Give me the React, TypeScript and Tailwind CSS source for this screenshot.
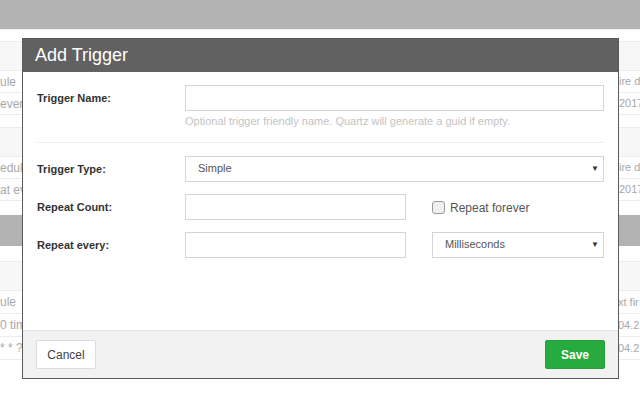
import { ReactNode } from 'react';

type BgRow = { left: string; right: string };

const sectionRows: { rows: BgRow[] }[] = [
  {
    rows: [
      { left: 'ule', right: 'ire d' },
      { left: 'every', right: '2017' },
    ],
  },
  {
    rows: [
      { left: 'edule', right: 'ire d' },
      { left: 'at eve', right: '2017' },
    ],
  },
];

const BgSection = ({ rows, top }: { rows: BgRow[]; top: string }) => (
  <div className={top}>
    <div className="h-[30px] border-y border-[#ececec] bg-[#f7f7f7]" />
    {rows.map((r, i) => (
      <div
        key={i}
        className="flex h-[22px] items-center justify-between border-b border-[#ececec] text-[12px] text-[#a8a8a8]"
      >
        <span>{r.left}</span>
        <span className="w-[21px] whitespace-nowrap text-[11px]">{r.right}</span>
      </div>
    ))}
  </div>
);

const Field = ({ label, children }: { label: string; children: ReactNode }) => (
  <div className="flex items-start">
    <label className="w-[148px] pt-[5px] text-[11px] font-bold text-[#333]">{label}</label>
    <div className="flex-1">{children}</div>
  </div>
);

const Select = ({ value, className }: { value: string; className: string }) => (
  <div
    className={`flex h-[26px] items-center justify-between border border-[#d4d4d4] bg-white pl-[12px] pr-[4px] text-[11px] text-[#555] ${className}`}
  >
    <span>{value}</span>
    <span className="text-[8px] text-[#333]">▼</span>
  </div>
);

const App = () => {
  return (
    <div className="relative h-[400px] w-[640px] overflow-hidden bg-white font-['Liberation_Sans',Arial,sans-serif]">
      <div className="h-[29px] bg-[#b3b3b3]" />
      <div className="h-px bg-[#efefef]" />
      <BgSection rows={sectionRows[0].rows} top="mt-[11px]" />
      <BgSection rows={sectionRows[1].rows} top="mt-[12px]" />
      <div className="mt-[14px] h-[31px] bg-[#b3b3b3]" />
      <div className="mt-[15px]">
        <div className="h-[30px] border-y border-[#ececec] bg-[#f7f7f7]" />
        {[
          { left: 'ule', right: 'xt fir' },
          { left: '0 tim', right: '04.2' },
          { left: '* * ?', right: '04.2' },
        ].map((r, i) => (
          <div
            key={i}
            className="flex h-[23px] items-center justify-between border-b border-[#ececec] text-[12px] text-[#a8a8a8]"
          >
            <span>{r.left}</span>
            <span className="w-[22px] whitespace-nowrap text-[11px]">{r.right}</span>
          </div>
        ))}
      </div>

      {/* modal */}
      <div className="absolute left-[22px] top-[38px] flex h-[341px] w-[597px] flex-col border border-[#5a5a5a] bg-white">
        <div className="flex h-[33px] items-center bg-[#616161] px-[12px] text-[18px] text-white">
          Add Trigger
        </div>
        <div className="flex-1 px-[14px] pt-[13px]">
          <Field label="Trigger Name:">
            <div className="h-[26px] border border-[#d4d4d4]" />
            <p className="mt-[2px] text-[11px] text-[#c4c4c4]">
              Optional trigger friendly name. Quartz will generate a guid if empty.
            </p>
          </Field>
          <div className="mb-[13px] mt-[12px] h-px bg-[#ececec]" />
          <div className="flex flex-col gap-[12px]">
            <Field label="Trigger Type:">
              <Select value="Simple" className="" />
            </Field>
            <Field label="Repeat Count:">
              <div className="flex items-center">
                <div className="h-[26px] w-[221px] border border-[#d4d4d4]" />
                <div className="ml-[26px] mt-[2px] flex items-center gap-[5px]">
                  <span className="h-[13px] w-[13px] rounded-[3px] border border-[#999] bg-[#f0f0f0]" />
                  <span className="text-[12px] text-[#555]">Repeat forever</span>
                </div>
              </div>
            </Field>
            <Field label="Repeat every:">
              <div className="flex items-center">
                <div className="h-[26px] w-[221px] border border-[#d4d4d4]" />
                <Select value="Milliseconds" className="ml-[26px] flex-1" />
              </div>
            </Field>
          </div>
        </div>
        <div className="flex h-[48px] items-center justify-between border-t border-[#e5e5e5] bg-[#f2f2f2] px-[13px]">
          <button className="h-[29px] w-[60px] rounded-[2px] border border-[#dcdcdc] bg-white text-[12px] text-[#444]">
            Cancel
          </button>
          <button className="h-[29px] w-[60px] rounded-[2px] border border-[#25a03a] bg-[#28ab3e] text-[12px] font-bold text-white">
            Save
          </button>
        </div>
      </div>
    </div>
  );
};

export default App;
